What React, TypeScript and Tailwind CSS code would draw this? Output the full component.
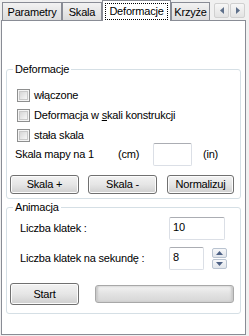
import React from 'react';

const font = { fontFamily: '"Liberation Sans", Arial, sans-serif' };

function Tab({ label, width, selected = false }: { label: string; width: string; selected?: boolean }) {
  if (selected) {
    return (
      <div className={`relative z-10 -mb-px flex h-[21px] items-start border border-b-0 border-[#898c95] bg-white px-[2px] pt-[2px] ${width}`}>
        <span className="flex h-[17px] w-full items-center justify-center border border-dotted border-black leading-[13px]">
          {label}
        </span>
      </div>
    );
  }
  return (
    <div
      className={`flex h-[18px] items-center justify-center border border-b-0 border-[#898c95] bg-gradient-to-b from-[#f2f2f2] to-[#dcdcdc] pt-px leading-[13px] ${width}`}
    >
      {label}
    </div>
  );
}

function ArrowBtn({ dir }: { dir: 'left' | 'right' }) {
  return (
    <div className="flex h-[15px] w-[15px] items-center justify-center rounded-[2px] border border-[#d0d0d0] bg-gradient-to-b from-[#f6f6f6] to-[#e3e3e3]">
      <svg width="4" height="7" viewBox="0 0 4 7">
        {dir === 'left' ? <path d="M4 0 L0 3.5 L4 7 Z" fill="#5d6f8a" /> : <path d="M0 0 L4 3.5 L0 7 Z" fill="#5d6f8a" />}
      </svg>
    </div>
  );
}

function CheckBox({ children }: { children: React.ReactNode }) {
  return (
    <div className="flex h-[13px] items-center">
      <div className="h-[13px] w-[13px] shrink-0 border border-[#8e8f8f] bg-[#f4f4f4] p-px">
        <div className="h-full w-full border border-[#c9c9c9] bg-gradient-to-br from-[#d6d6d6] to-[#f7f7f7]" />
      </div>
      <span className="ml-[4px] leading-[13px]">{children}</span>
    </div>
  );
}

function Button({ label, className = '' }: { label: string; className?: string }) {
  return (
    <div
      className={`flex items-center justify-center rounded-[3px] border border-[#707070] bg-gradient-to-b from-[#f2f2f2] via-[#e6e6e6] to-[#cfcfcf] shadow-[inset_0_0_0_1px_#fcfcfc] ${className}`}
    >
      {label}
    </div>
  );
}

function TextBox({ value = '', className = '' }: { value?: string; className?: string }) {
  return (
    <div className={`shrink-0 rounded-[2px] border border-[#dbdfe6] border-t-[#abadb3] bg-white pl-[3px] pt-[3px] leading-[13px] ${className}`}>
      {value}
    </div>
  );
}

function SpinBtn({ up }: { up?: boolean }) {
  return (
    <div className="flex h-[10px] w-[15px] items-center justify-center rounded-[2px] border border-[#b9c3d0] bg-gradient-to-b from-[#f7f8fa] to-[#e1e5eb]">
      <svg width="7" height="4" viewBox="0 0 7 4">
        {up ? <path d="M0 4 L3.5 0 L7 4 Z" fill="#4d6185" /> : <path d="M0 0 L3.5 4 L7 0 Z" fill="#4d6185" />}
      </svg>
    </div>
  );
}

export default function App() {
  return (
    <div style={font} className="h-[336px] w-[249px] overflow-hidden bg-[#f0f0f0] text-[11px] tracking-[-0.2px] text-black">
      {/* tab strip */}
      <div className="flex h-[20px] items-end pl-[2px]">
        <Tab label="Parametry" width="w-[60px]" />
        <Tab label="Skala" width="w-[40px]" />
        <Tab label="Deformacje" width="w-[69px]" selected />
        <Tab label="Krzyże" width="w-[39px]" />
        <div className="ml-[4px] flex gap-px self-start pt-[3px]">
          <ArrowBtn dir="left" />
          <ArrowBtn dir="right" />
        </div>
      </div>

      {/* page */}
      <div className="ml-[1px] h-[315px] w-[245px] border border-[#898c95] bg-white px-[4px] pt-[42px]">
        <fieldset className="h-[136px] rounded-[3px] border border-[#d5dfe5] pl-[10px] pr-[6px]">
          <legend className="-ml-[4px] px-[2px] leading-[13px]">Deformacje</legend>
          <div className="flex flex-col gap-[7px] pt-[13px]">
            <CheckBox>włączone</CheckBox>
            <CheckBox>
              Deformacja w <u>s</u>kali konstrukcji
            </CheckBox>
            <CheckBox>stała skala</CheckBox>
          </div>
          <div className="mt-px flex h-[23px] items-center">
            <span className="-ml-[2px] w-[103px]">Skala mapy na 1</span>
            <span className="w-[35px]">(cm)</span>
            <TextBox className="h-[23px] w-[39px]" />
            <span className="ml-[11px]">(in)</span>
          </div>
          <div className="mt-[9px] flex">
            <Button label="Skala +" className="-ml-[7px] h-[19px] w-[69px]" />
            <Button label="Skala -" className="ml-[9px] h-[19px] w-[69px]" />
            <Button label="Normalizuj" className="ml-[10px] h-[19px] w-[67px]" />
          </div>
        </fieldset>

        <fieldset className="mt-[2px] h-[113px] rounded-[3px] border border-[#d5dfe5] pl-[13px] pr-[6px]">
          <legend className="-ml-[7px] px-[2px] leading-[13px]">Animacja</legend>
          <div className="mt-[3px] flex h-[23px] items-center">
            <span className="w-[149px]">Liczba klatek :</span>
            <TextBox value="10" className="h-[23px] w-[56px]" />
          </div>
          <div className="mt-[7px] flex items-center">
            <span className="w-[149px]">Liczba klatek na sekundę :</span>
            <TextBox value="8" className="h-[23px] w-[35px]" />
            <div className="ml-[8px] flex flex-col gap-px">
              <SpinBtn up />
              <SpinBtn />
            </div>
          </div>
          <div className="mt-[13px] flex items-center">
            <Button label="Start" className="-ml-[10px] h-[22px] w-[69px]" />
            <div className="ml-[16px] h-[18px] w-[139px] rounded-[3px] border border-[#a8a8a8] bg-gradient-to-b from-[#f3f3f3] via-[#e2e2e2] to-[#d6d6d6] shadow-[inset_2px_0_2px_#c9c9c9,inset_-2px_0_2px_#c9c9c9]" />
          </div>
        </fieldset>
      </div>
    </div>
  );
}
